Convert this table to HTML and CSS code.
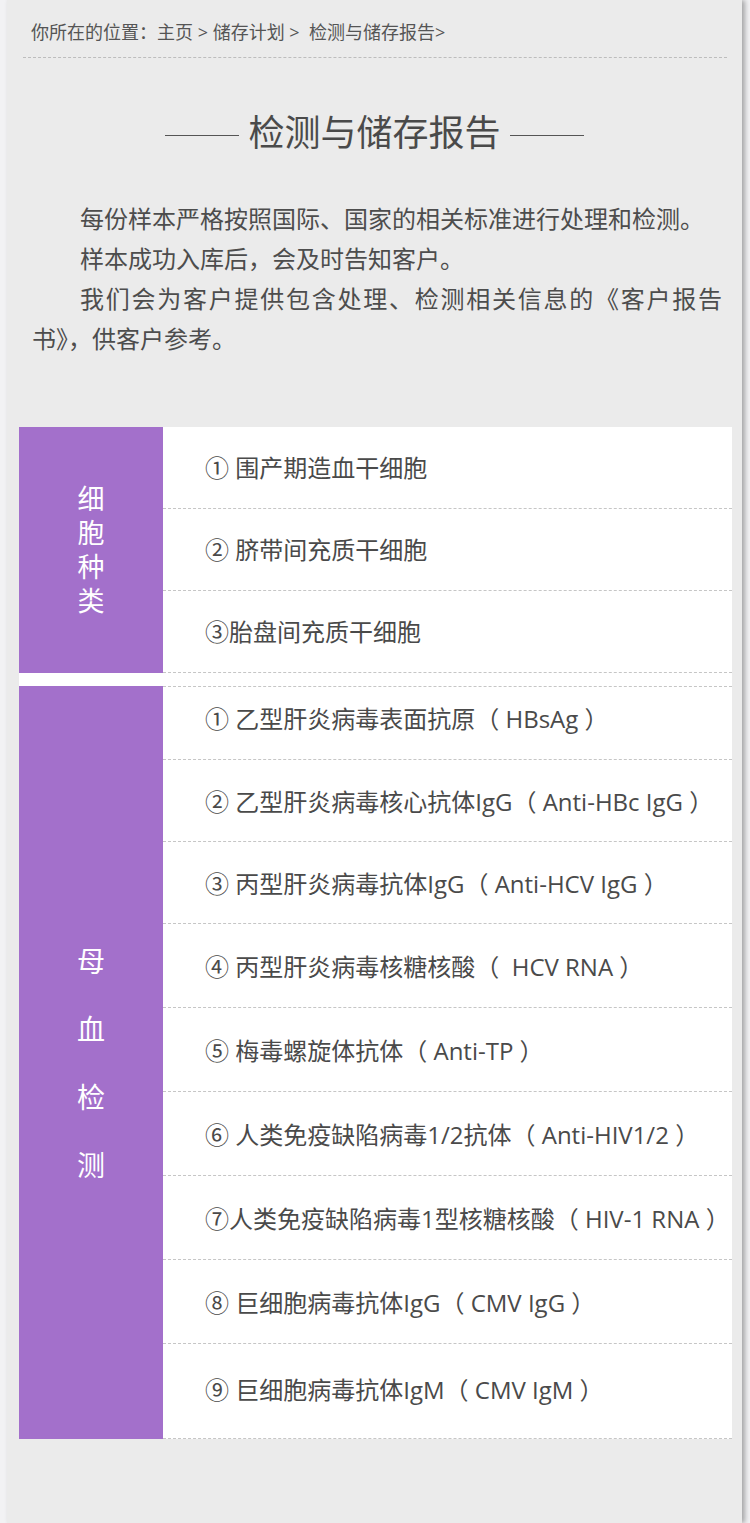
FILE: index.html
```html
<!DOCTYPE html>
<html lang="zh-CN">
<head>
<meta charset="utf-8">
<title>检测与储存报告</title>
<link rel="stylesheet" href="styles.css">
</head>
<body>
<div class="page">
  <div class="crumb">你所在的位置：主页 &gt; 储存计划 &gt; &nbsp;检测与储存报告&gt;</div>
  <h1 class="title">检测与储存报告</h1>
  <div class="intro">
    <p>每份样本严格按照国际、国家的相关标准进行处理和检测。</p>
    <p>样本成功入库后，会及时告知客户。</p>
    <p>我们会为客户提供包含处理、检测相关信息的《客户报告书》，供客户参考。</p>
  </div>
  <div class="table">
    <section class="group group-cells">
      <div class="label"><span>细胞种类</span></div>
      <ul class="items">
        <li>① 围产期造血干细胞</li>
        <li>② 脐带间充质干细胞</li>
        <li>③胎盘间充质干细胞</li>
      </ul>
    </section>
    <section class="group group-blood">
      <div class="label"><span>母血检测</span></div>
      <ul class="items">
        <li>① 乙型肝炎病毒表面抗原（ HBsAg ）</li>
        <li>② 乙型肝炎病毒核心抗体IgG（ Anti-HBc IgG ）</li>
        <li>③ 丙型肝炎病毒抗体IgG（ Anti-HCV IgG ）</li>
        <li>④ 丙型肝炎病毒核糖核酸（ &nbsp;HCV RNA ）</li>
        <li>⑤ 梅毒螺旋体抗体（ Anti-TP ）</li>
        <li>⑥ 人类免疫缺陷病毒1/2抗体（ Anti-HIV1/2 ）</li>
        <li>⑦人类免疫缺陷病毒1型核糖核酸（ HIV-1 RNA ）</li>
        <li>⑧ 巨细胞病毒抗体IgG（ CMV IgG ）</li>
        <li>⑨ 巨细胞病毒抗体IgM（ CMV IgM ）</li>
      </ul>
    </section>
  </div>
</div>
</body>
</html>
```

FILE: styles.css
```css
html, body {
  margin: 0;
  padding: 0;
}

body {
  background: #f2f2f4;
  font-family: "Open Sans", "Noto Sans CJK SC", sans-serif;
  color: #4d4d4d;
}

.page {
  margin-left: 7px;
  width: 735px;
  min-height: 1523px;
  background: #ebebeb;
  box-shadow: 3px 0 5px rgba(0, 0, 0, 0.32);
  overflow: hidden;
}

.crumb {
  margin: 0 15px 0 16px;
  padding: 20px 0 13px 8px;
  font-size: 18px;
  line-height: 24px;
  color: #555;
  border-bottom: 1px dashed #bdbdbd;
}

.title {
  margin: 51px 0 0;
  display: flex;
  align-items: center;
  justify-content: center;
  gap: 9px;
  font-size: 36px;
  font-weight: normal;
  line-height: 48px;
  color: #4a4a4a;
}

.title::before,
.title::after {
  content: "";
  width: 74px;
  height: 1px;
  margin-top: 4px;
  background: #555;
}

.intro {
  margin-top: 42px;
  padding: 0 20px 0 25px;
  font-size: 24px;
  line-height: 40px;
  text-align: justify;
  color: #4d4d4d;
}

.intro p {
  margin: 0;
  text-indent: 2em;
}

.table {
  margin: 68px 10px 0 12px;
  background: #fff;
}

.group {
  display: flex;
}

.group-cells {
  margin-bottom: 13px;
}

.label {
  width: 144px;
  flex: none;
  background: #a370cb;
  color: #fff;
  display: flex;
  align-items: center;
  justify-content: center;
}

.label span {
  width: 1em;
  word-break: break-all;
  text-align: center;
}

.group-cells .label span {
  font-size: 27px;
  line-height: 34px;
}

.group-blood .label span {
  font-size: 28px;
  line-height: 68px;
}

.items {
  flex: 1;
  list-style: none;
  margin: 0;
  padding: 0;
}

.items li {
  box-sizing: border-box;
  display: flex;
  align-items: center;
  padding-left: 42px;
  border-bottom: 1px dashed #c6c6c6;
  font-size: 24px;
  color: #4a4a4a;
  white-space: pre;
}

.group-cells li {
  height: 82px;
  padding-bottom: 3px;
}

.group-blood .items {
  border-top: 1px dashed #c6c6c6;
}

.group-blood li {
  height: 84px;
}

.group-blood li:first-child {
  height: 73px;
  padding-bottom: 11px;
}

.group-blood li:nth-child(2),
.group-blood li:nth-child(3) {
  height: 82px;
}

.group-blood li:last-child {
  height: 95px;
  padding-bottom: 6px;
}
```
